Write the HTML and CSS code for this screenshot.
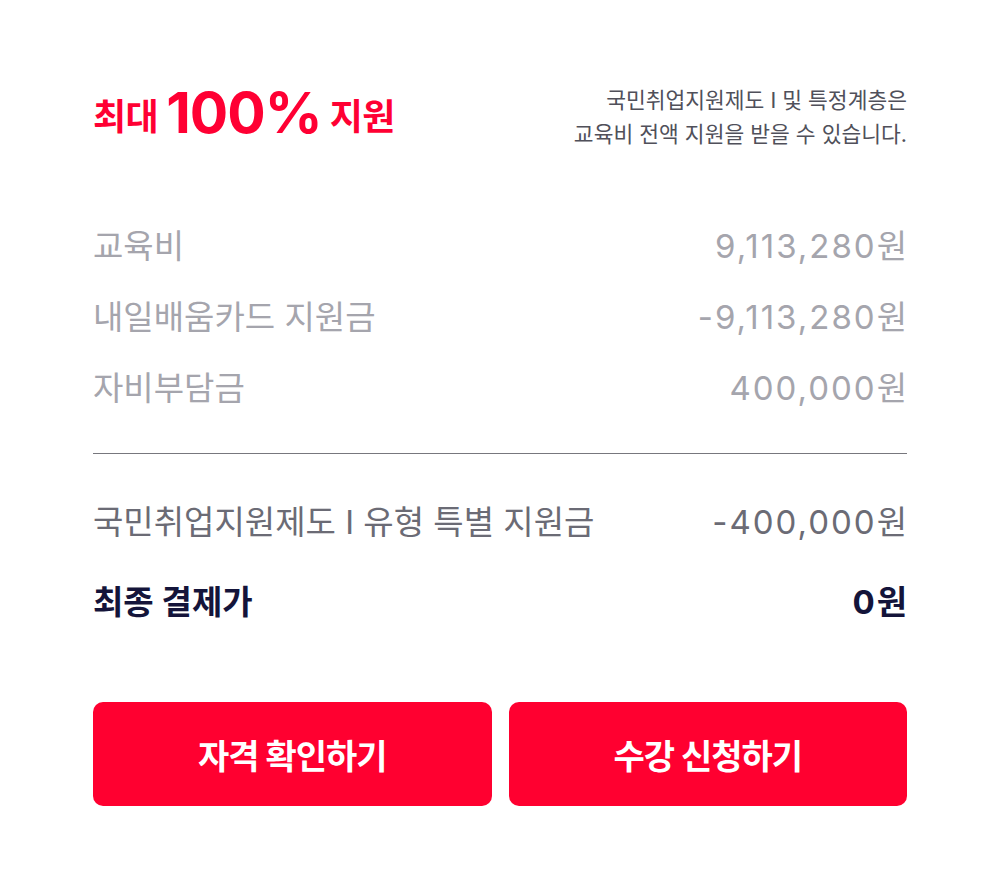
FILE: index.html
```html
<!DOCTYPE html>
<html lang="ko">
<head>
    <meta charset="UTF-8">
    <meta name="viewport" content="width=device-width, initial-scale=1.0">
    <title>최대 100% 지원</title>
    <link rel="stylesheet" href="styles.css">
</head>
<body>
    <main class="panel">
        <!-- 상단 헤드라인 -->
        <header class="headline">
            <h1 class="headline-title">최대 <span class="big">100%</span> 지원</h1>
            <p class="headline-note">국민취업지원제도 I 및 특정계층은<br>교육비 전액 지원을 받을 수 있습니다.</p>
        </header>

        <!-- 금액 내역 -->
        <ul class="price-list">
            <li class="price-row"><span>교육비</span><span class="amount">9,113,280원</span></li>
            <li class="price-row"><span>내일배움카드 지원금</span><span class="amount">-9,113,280원</span></li>
            <li class="price-row"><span>자비부담금</span><span class="amount">400,000원</span></li>
        </ul>

        <div class="summary">
            <div class="summary-row"><span>국민취업지원제도 I 유형 특별 지원금</span><span class="amount">-400,000원</span></div>
            <div class="summary-row total"><span>최종 결제가</span><span class="amount">0원</span></div>
        </div>

        <div class="actions">
            <a href="#" class="btn">자격 확인하기</a>
            <a href="#" class="btn">수강 신청하기</a>
        </div>
    </main>
</body>
</html>
```

FILE: styles.css
```css
body {
    margin: 0;
    background-color: #ffffff;
    font-family: Inter, "Noto Sans CJK KR", sans-serif;
}

.panel {
    width: 814px;
    padding: 76px 93px 0;
}

.headline {
    display: flex;
    justify-content: space-between;
    align-items: flex-start;
}

.headline-title {
    margin: 7px 0 0;
    font-size: 36px;
    font-weight: 700;
    color: #ff0033;
    letter-spacing: -0.5px;
    line-height: 60px;
}

.headline-title .big {
    font-size: 57px;
    letter-spacing: -1px;
    vertical-align: -3px;
}

.headline-note {
    margin: 7px 0 0;
    text-align: right;
    font-size: 21.5px;
    line-height: 34px;
    color: #50505a;
}

.price-list {
    list-style: none;
    margin: 60px 0 0;
    padding: 0 0 29px;
    border-bottom: 1px solid #77777d;
}

.price-row {
    display: flex;
    justify-content: space-between;
    font-size: 33px;
    line-height: 71px;
    color: #a5a5ad;
}

.summary {
    padding-top: 28px;
}

.summary-row {
    display: flex;
    justify-content: space-between;
    font-size: 33px;
    line-height: 80px;
    color: #6b6b75;
}

.summary-row.total {
    font-weight: 700;
    color: #14143a;
}

/* 숫자는 조금 넓게 */
.amount {
    letter-spacing: 2px;
    margin-right: -2px;
}

.actions {
    display: flex;
    gap: 17px;
    margin-top: 60px;
}

.btn {
    flex: 1;
    height: 104px;
    display: flex;
    justify-content: center;
    align-items: center;
    background-color: #ff0030;
    border-radius: 10px;
    color: #ffffff;
    font-size: 34px;
    font-weight: 700;
    letter-spacing: -1px;
    text-decoration: none;
}
```
